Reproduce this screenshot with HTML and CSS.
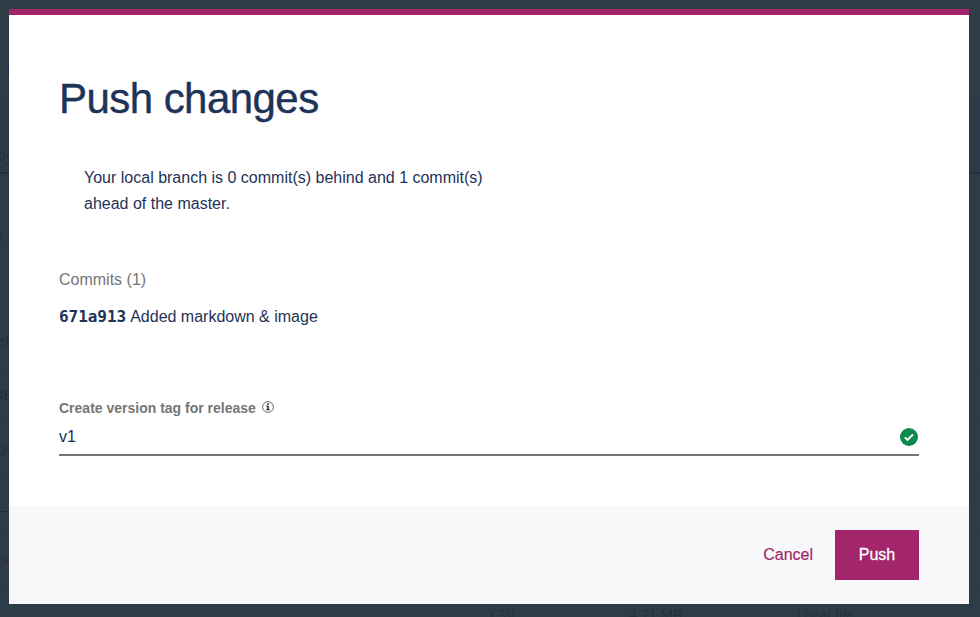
FILE: index.html
```html
<!DOCTYPE html>
<html lang="en">
<head>
<meta charset="utf-8">
<title>Push changes</title>
<link rel="stylesheet" href="styles.css">
</head>
<body>
<div class="page" aria-hidden="true">
  <div class="page-head"><span class="mark"></span></div>
  <div class="page-author">by</div>
  <div class="page-title">s</div>
  <div class="page-row row-branch">ch</div>
  <div class="page-row row-size">ME</div>
  <div class="page-row">OC</div>
  <div class="page-row row-empty">–</div>
  <div class="page-row row-link">pe</div>
  <div class="page-file"><span>CSV</span><span>4.21 MB</span><span>Local file</span></div>
</div>
<div class="overlay">
  <section class="modal" role="dialog" aria-labelledby="dialog-title">
    <div class="modal-body">
      <h1 id="dialog-title">Push changes</h1>
      <p class="summary"><span>Your local branch is 0 commit(s) behind and 1 commit(s)</span><br><span>ahead of the master.</span></p>
      <h2 class="commits-title">Commits (1)</h2>
      <p class="commit"><code>671a913</code><span>Added markdown &amp; image</span></p>
      <div class="field-label">
        <label for="tag">Create version tag for release</label>
        <svg class="info" viewBox="0 0 12 12"><circle cx="6" cy="6" r="5.4" fill="none" stroke="#444" stroke-width=".8"/><path d="M5.2 2.3h1.6v1.5H5.2zM4.3 4.8h2.4v3.5h1v.9H4.3v-.9h1V5.7h-1z" fill="#111"/></svg>
      </div>
      <div class="field">
        <input id="tag" type="text" value="v1">
        <svg class="valid" viewBox="0 0 18 18"><circle cx="9" cy="9" r="9" fill="#0b8a50"/><path d="M4.9 9.4l2.6 2.5 5.4-5.4" fill="none" stroke="#fff" stroke-width="2"/></svg>
      </div>
    </div>
    <footer class="modal-footer">
      <button class="cancel" type="button">Cancel</button>
      <button class="push" type="button">Push</button>
    </footer>
  </section>
</div>
</body>
</html>
```

FILE: styles.css
```css
* { box-sizing: border-box; }
body {
  margin: 0;
  width: 980px;
  height: 617px;
  overflow: hidden;
  background: #2d3d48;
  color: #1e3358;
  font: 16px/26px "Liberation Sans", Arial, sans-serif;
}
h1, h2, p { margin: 0; font-weight: 400; }

/* Dimmed page under the dialog */
.page {
  position: absolute;
  inset: 0;
  overflow: hidden;
  color: #21313d;
  font-family: "Open Sans", sans-serif;
}
.page > div { display: flex; }
.page-head { height: 95px; padding: 64px 0 0 8px; background: #2d3e46; }
.mark { width: 1px; height: 12px; background: #242944; }
.page-author {
  height: 79px;
  padding-top: 47px;
  border-bottom: 2px solid #21313e;
  background: #2c3b49;
  font-size: 15px;
  font-style: italic;
  text-indent: -3px;
}
.page-title { height: 140px; padding-top: 48px; margin-left: -7px; font-size: 20px; font-weight: 600; }
.page-row {
  height: 55px;
  padding-top: 13px;
  margin-left: -5px;
  border-bottom: 1px solid #293944;
  color: #212e3b;
  font-family: "Liberation Sans", Arial, sans-serif;
  font-size: 15px;
}
.row-branch { padding-top: 15px; margin-left: -2px; }
.row-size { margin-left: -9px; }
.row-empty { padding-top: 18px; margin-left: 0; }
.row-link { margin-left: -3px; color: #342e42; }
.page-file { padding: 16px 0 0 490px; font-size: 14px; line-height: 20px; }
.page-file span:nth-child(1) { width: 139px; }
.page-file span:nth-child(2) { width: 168px; }

/* Dialog */
.overlay { position: absolute; inset: 0; padding: 9px 11px 13px 9px; }
.modal {
  display: flex;
  flex-direction: column;
  height: 595px;
  border-top: 6px solid #a3256b;
  background: #fff;
}
.modal-body { flex: 1; padding: 59px 50px 0; }
h1 { height: 91px; font-size: 42px; line-height: 50px; letter-spacing: -0.55px; -webkit-text-stroke: 0.4px #1e3358; }
.summary { height: 102px; padding-left: 25px; }
.commits-title { height: 37px; color: #757575; font-size: 16px; }
.commit { display: flex; gap: 4px; height: 93px; }
.commit code { font: 700 16px/26px "DejaVu Sans Mono", monospace; letter-spacing: -0.04px; }
.field-label { display: flex; align-items: flex-start; gap: 6px; height: 24px; color: #757575; font-size: 14px; font-weight: 700; line-height: 22px; }
.info { width: 12px; height: 12px; margin-top: 4px; }
.field { display: flex; justify-content: space-between; height: 35px; border-bottom: 2px solid #757575; }
.field input {
  flex: 1;
  height: 26px;
  margin-top: 3px;
  padding: 0;
  border: 0;
  outline: 0;
  background: none;
  color: #19304a;
  font: inherit;
}
.valid { width: 18px; height: 18px; margin: 7px 1px 0 0; }
.modal-footer {
  display: flex;
  justify-content: flex-end;
  align-items: center;
  gap: 22px;
  height: 98px;
  padding: 0 50px;
  background: #f8f8fb;
}
button { padding: 0; border: 0; font: inherit; }
.cancel { background: none; color: #a3256b; -webkit-text-stroke: 0.2px #a3256b; }
.push { width: 84px; height: 50px; background: #a3256b; color: #fff; -webkit-text-stroke: 0.3px #fff; }
```
